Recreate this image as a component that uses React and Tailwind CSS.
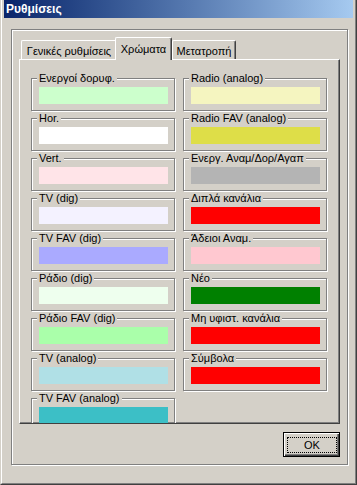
const leftGroups = [
  ["Ενεργοί δορυφ.", "bg-[#ccffcc]"],
  ["Hor.", "bg-[#ffffff]"],
  ["Vert.", "bg-[#ffe4e8]"],
  ["TV (dig)", "bg-[#f4f2ff]"],
  ["TV FAV (dig)", "bg-[#aaaaff]"],
  ["Ράδιο (dig)", "bg-[#eeffee]"],
  ["Ράδιο FAV (dig)", "bg-[#aaffaa]"],
  ["TV (analog)", "bg-[#b0e0e6]"],
  ["TV FAV (analog)", "bg-[#3cbfc6]"],
];

const rightGroups = [
  ["Radio (analog)", "bg-[#f5f5c0]"],
  ["Radio FAV (analog)", "bg-[#dede48]"],
  ["Ενεργ. Αναμ/Δορ/Αγαπ", "bg-[#b4b4b4]"],
  ["Διπλά κανάλια", "bg-[#ff0000]"],
  ["Άδειοι Αναμ.", "bg-[#ffc8d0]"],
  ["Νέο", "bg-[#008000]"],
  ["Μη υφιστ. κανάλια", "bg-[#ff0000]"],
  ["Σύμβολα", "bg-[#ff0000]"],
];

function ColorGroup({ label, color }) {
  return (
    <div className="relative shrink-0 w-[144px] h-[33px] border border-[#808080] shadow-[inset_1px_1px_0_#fff,1px_1px_0_#fff] pl-[7px] pt-[8px]">
      {/* Legend over the frame line */}
      <span className="absolute left-[5px] top-[-7px] px-[2px] bg-[#d4d0c8] leading-[13px] whitespace-nowrap">
        {label}
      </span>
      <div className={`w-[129px] h-[17px] ${color}`} />
    </div>
  );
}

export default function App() {
  return (
    <div className="w-[357px] h-[485px] bg-[#d4d0c8] border-l border-l-[#d4d0c8] border-r border-b border-r-[#404040] border-b-[#404040] overflow-hidden font-['Liberation_Sans',Arial,sans-serif] text-[11px] text-black">
      <div className="h-full border-l border-l-white border-r border-b border-r-[#808080] border-b-[#808080] px-[2px]">
        {/* Title bar */}
        <div className="h-[18px] bg-linear-to-r from-[#0a246a] to-[#a6caf0] pl-[2px] text-white font-bold text-[12px] leading-[19px]">
          Ρυθμίσεις
        </div>

        {/* Etched frame */}
        <div className="mt-[11px] ml-[7px] w-[337px] h-[436px] border border-[#808080] shadow-[inset_1px_1px_0_#fff,1px_1px_0_#fff] pt-[7px] pl-[7px]">
          {/* Tabs */}
          <div className="relative z-10 flex items-end h-[22px] pl-[2px]">
            <div className="w-[96px] h-[19px] flex justify-center pt-[2px] border-t border-l border-r border-t-white border-l-white border-r-[#404040] rounded-t-[2px] whitespace-nowrap">
              Γενικές ρυθμίσεις
            </div>
            <div className="relative z-10 -ml-[2px] -mb-[1px] w-[57px] h-[23px] flex justify-center pt-[3px] bg-[#d4d0c8] border-t border-l border-r border-t-white border-l-white border-r-[#404040] shadow-[inset_-1px_0_0_#808080] rounded-t-[2px]">
              Χρώματα
            </div>
            <div className="w-[64px] h-[19px] flex justify-center pt-[2px] border-t border-l border-r border-t-white border-l-white border-r-[#404040] shadow-[inset_-1px_0_0_#808080] rounded-t-[2px] whitespace-nowrap">
              Μετατροπή
            </div>
          </div>

          {/* Tab page */}
          <div className="w-[321px] h-[365px] border-t border-l border-r border-b border-t-white border-l-white border-r-[#404040] border-b-[#404040] shadow-[inset_-1px_-1px_0_#808080] overflow-hidden pl-[11px] pt-[18px]">
            <div className="flex items-start gap-[8px]">
              <div className="flex flex-col gap-[7px]">
                {leftGroups.map(([label, color]) => (
                  <ColorGroup key={label} label={label} color={color} />
                ))}
              </div>
              <div className="flex flex-col gap-[7px]">
                {rightGroups.map(([label, color]) => (
                  <ColorGroup key={label} label={label} color={color} />
                ))}
              </div>
            </div>
          </div>

          {/* OK button */}
          <div className="w-[321px] mt-[8px] flex justify-end">
            <button
              type="button"
              className="w-[57px] h-[25px] border border-black bg-[#d4d0c8] shadow-[inset_1px_1px_0_#fff,inset_-1px_-1px_0_#404040,inset_-2px_-2px_0_#808080] pt-[4px] pl-[3px] pr-[2px] pb-[3px] flex"
            >
              <span className="flex-1 flex items-center justify-center border border-dotted border-black leading-[13px]">
                OK
              </span>
            </button>
          </div>
        </div>
      </div>
    </div>
  );
}
